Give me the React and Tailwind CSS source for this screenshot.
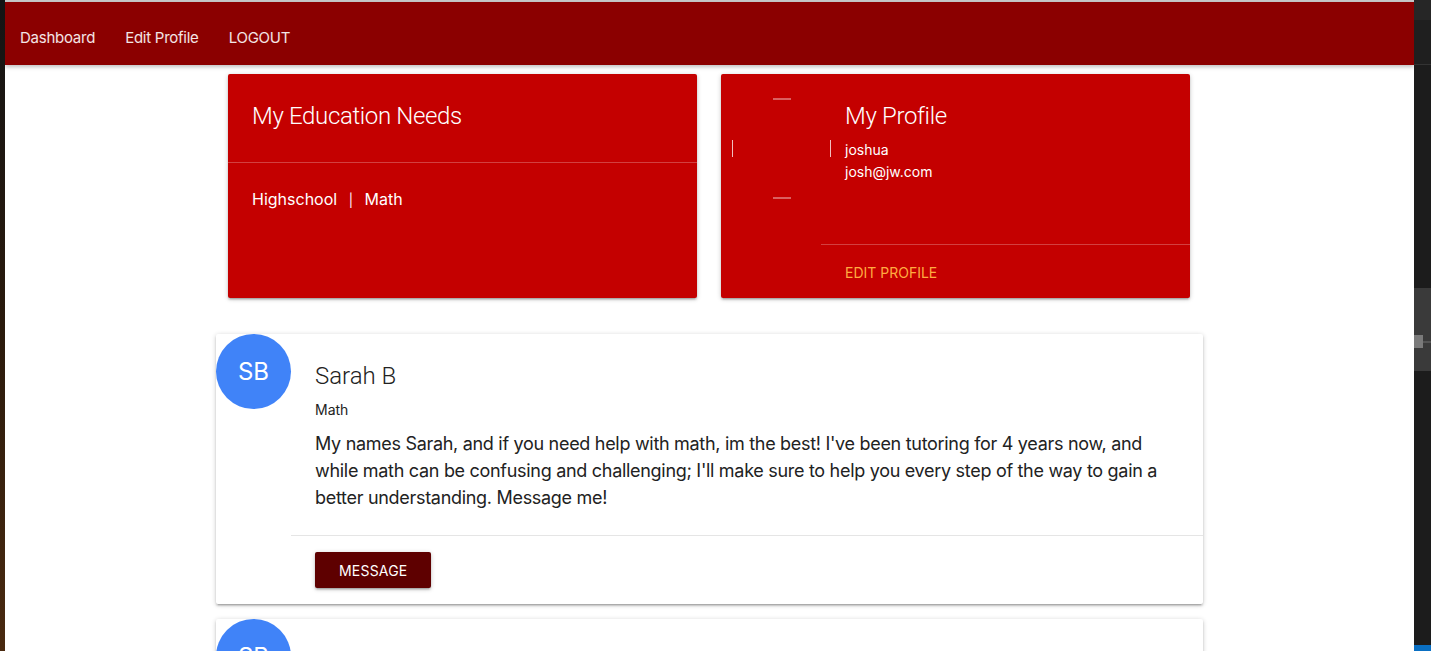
import React from 'react';

const cardShadow =
  'shadow-[0_2px_2px_0_rgba(0,0,0,0.14),0_3px_1px_-2px_rgba(0,0,0,0.12),0_1px_5px_0_rgba(0,0,0,0.2)]';

const titleFont = { fontFamily: 'Roboto, "Liberation Sans", sans-serif' };

const tutors = [
  {
    initials: 'SB',
    name: 'Sarah B',
    subject: 'Math',
    bio: "My names Sarah, and if you need help with math, im the best! I've been tutoring for 4 years now, and while math can be confusing and challenging; I'll make sure to help you every step of the way to gain a better understanding. Message me!",
  },
  {
    initials: 'SB',
    name: 'Sarah B',
    subject: 'Math',
    bio: "My names Sarah, and if you need help with math, im the best! I've been tutoring for 4 years now, and while math can be confusing and challenging; I'll make sure to help you every step of the way to gain a better understanding. Message me!",
  },
];

const TutorCard = ({ tutor }) => (
  <div className={`flex bg-white rounded-[2px] ${cardShadow} shrink-0`}>
    <div className="w-[75px] shrink-0">
      <div className="w-[75px] h-[75px] rounded-full bg-[#4083f8] flex items-center justify-center text-white text-[24px]">
        {tutor.initials}
      </div>
    </div>
    <div className="flex-1 flex flex-col">
      <div className="px-6 pt-[26px] pb-6">
        <h3 className="text-[24px] leading-[32px] font-light text-[#222] mb-[7px]" style={titleFont}>{tutor.name}</h3>
        <p className="text-[14px] leading-[22px] text-[#222]">{tutor.subject}</p>
        <p className="mt-[9px] text-[18px] leading-[27px] tracking-[-0.3px] text-[#222]">{tutor.bio}</p>
      </div>
      <div className="border-t border-[#e5e5e5] px-6 py-4">
        <button className={`h-9 px-6 bg-[#5e0000] text-white text-[14px] uppercase tracking-[0.2px] rounded-[2px] ${cardShadow}`}>
          Message
        </button>
      </div>
    </div>
  </div>
);

export default function App() {
  return (
    <div
      className="w-[1431px] h-[651px] flex overflow-hidden bg-[#1c1c1c]"
      style={{ fontFamily: 'Inter, Roboto, "Liberation Sans", sans-serif' }}
    >
      {/* desktop edge */}
      <div className="w-[5px] shrink-0 bg-gradient-to-b from-[#141414] via-[#2a1a0c] to-[#4a2a10]" />

      {/* browser viewport */}
      <div className="w-[1409px] shrink-0 flex flex-col bg-white overflow-hidden">
        <div className="h-[2px] bg-[#c9c9c9] shrink-0" />
        <nav className="h-[63px] shrink-0 bg-[#8b0000] flex items-center pt-[10px] shadow-[0_2px_4px_0_rgba(0,0,0,0.25)] relative z-10">
          <a className="px-[15px] text-[15px] tracking-[-0.25px] text-white/90">Dashboard</a>
          <a className="px-[15px] text-[15px] tracking-[-0.25px] text-white/90">Edit Profile</a>
          <a className="px-[15px] text-[15px] tracking-[-0.25px] text-white/90">LOGOUT</a>
        </nav>

        <div className="w-[987px] mx-auto flex flex-col">
          {/* top cards */}
          <div className="flex gap-6 px-3 mt-[9px]">
            <div className={`w-[469px] h-[224px] bg-[#c40000] rounded-[2px] ${cardShadow} text-white flex flex-col`}>
              <div className="px-6 pt-[26px] pb-6 border-b border-[#d24040]">
                <h2 className="text-[24px] leading-[32px] font-light tracking-[-0.35px] mb-[6px]" style={titleFont}>My Education Needs</h2>
              </div>
              <div className="p-6 text-[16px] leading-[24px]">
                Highschool <span className="mx-[7px] text-[13px]">|</span> Math
              </div>
            </div>

            <div className={`w-[469px] h-[224px] bg-[#c40000] rounded-[2px] ${cardShadow} text-white flex relative`}>
              <div className="w-[100px] shrink-0" />
              <svg className="absolute left-[10px] top-[24px]" width="102" height="102" viewBox="0 0 102 102">
                <g stroke="rgba(255,255,255,0.75)" strokeWidth="1" fill="none">
                  <line x1="42" y1="1" x2="60" y2="1" />
                  <line x1="42" y1="100" x2="60" y2="100" />
                  <line x1="1.5" y1="42" x2="1.5" y2="59" />
                  <line x1="99.5" y1="42" x2="99.5" y2="59" />
                </g>
              </svg>
              <div className="flex-1 flex flex-col">
                <div className="flex-1 px-6 pt-[26px] pb-6">
                  <h2 className="text-[24px] leading-[32px] font-light tracking-[-0.35px] mb-[7px]" style={titleFont}>My Profile</h2>
                  <p className="text-[14px] leading-[22px]">joshua</p>
                  <p className="text-[14px] leading-[22px]">josh@jw.com</p>
                </div>
                <div className="border-t border-[#d24040] px-6 pt-[17px] pb-[14px] text-[14px] leading-[22px]">
                  <a className="uppercase text-[#ffab40]">Edit Profile</a>
                </div>
              </div>
            </div>
          </div>

          {/* tutors */}
          <div className="flex flex-col gap-[15px] mt-9">
            {tutors.map((t, idx) => (
              <TutorCard key={idx} tutor={t} />
            ))}
          </div>
        </div>
      </div>

      {/* editor edge */}
      <div className="w-[17px] shrink-0 bg-[#1c1c1c] flex flex-col">
        <div className="h-[20px] bg-[#262626]" />
        <div className="h-[45px] bg-[#1f1f1f] border-b border-[#333]" />
        <div className="h-[223px]" />
        <div className="h-[83px] bg-[#3a3a3a] pt-[47px]">
          <div className="flex items-center">
            <div className="w-[9px] h-[13px] bg-[#7a7a7a]" />
            <div className="flex-1 h-[2px] bg-[#555]" />
          </div>
        </div>
        <div className="flex-1" />
        <div className="h-[6px] bg-[#0a6fc2]" />
      </div>
    </div>
  );
}
